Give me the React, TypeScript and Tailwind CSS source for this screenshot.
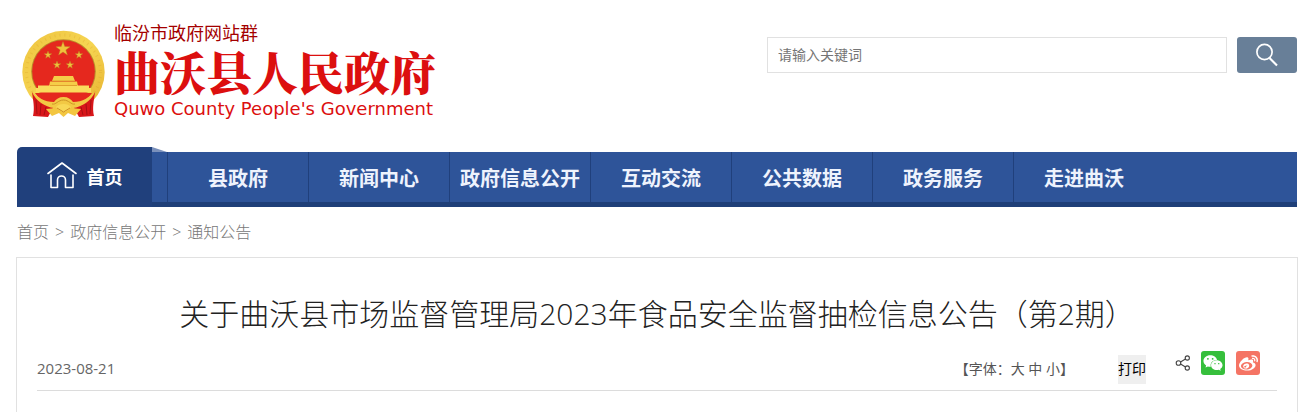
import { FaWeibo, FaWeixin } from "react-icons/fa6";

const NAV_ITEMS = [
  "县政府",
  "新闻中心",
  "政府信息公开",
  "互动交流",
  "公共数据",
  "政务服务",
  "走进曲沃",
];

const BREADCRUMBS = ["首页", "政府信息公开", "通知公告"];

const STARS = [
  { x: 41, y: 19, r: 7.5 },
  { x: 26, y: 25, r: 4 },
  { x: 57, y: 25, r: 4 },
  { x: 35, y: 35, r: 4 },
  { x: 48, y: 35, r: 4 },
];

function starPoints(cx: number, cy: number, r: number) {
  return Array.from({ length: 10 })
    .map((_, index) => {
      const radius = index % 2 === 0 ? r : r * 0.4;
      const angle = (Math.PI / 5) * index - Math.PI / 2;
      return `${cx + radius * Math.cos(angle)},${cy + radius * Math.sin(angle)}`;
    })
    .join(" ");
}

function Emblem() {
  return (
    <svg viewBox="0 0 84 88" className="h-[88px] w-[84px] shrink-0" aria-hidden="true">
      <defs>
        <linearGradient id="gold" x1="0" y1="0" x2="1" y2="1">
          <stop offset="0" stopColor="#eec440" />
          <stop offset="0.5" stopColor="#f6d552" />
          <stop offset="1" stopColor="#e6b02c" />
        </linearGradient>
      </defs>
      <circle cx="41.5" cy="42" r="41.2" fill="url(#gold)" />
      <circle cx="41.5" cy="42" r="37" fill="none" stroke="#d9a029" strokeWidth="3" strokeDasharray="1 4" opacity="0.3" />
      <circle cx="41.5" cy="41.5" r="32.300" fill="#b98a2a" />
      <circle cx="41.5" cy="41.5" r="31.3" fill="#e5281e" />
      {STARS.map((star) => (
        <polygon
          key={`${star.x}-${star.y}`}
          points={starPoints(star.x, star.y, star.r)}
          fill="#f0c23c"
          stroke="#b98424"
          strokeWidth="0.4"
        />
      ))}
      <path d="M32 46h19l2 5H30zM28 51.500h27l1 5H27z" fill="#f5cd48" />
      <path d="M16 55.500h51v2.500h2v4.500H14V58h2z" fill="#fadb5c" />
      <path d="M30 51h23M28 55.500h27" stroke="#d99426" strokeWidth="0.8" />
      <path d="M13 63h57l-7 9H20z" fill="#e5281e" />
      <path d="M10 62c5 7 13 12 22 14l-6 11-15-1c2-8 0-16-1-24z" fill="#d8161a" />
      <path d="M73 62c-5 7-13 12-22 14l6 11 15-1c-2-8 0-16 1-24z" fill="#d8161a" />
      <path d="M14 70l1 14M19 74l-1 11M24 77l-2 8M69 70l-1 14M64 74l1 11M59 77l2 8" stroke="#a80f13" strokeWidth="1" />
      <path
        d="M10 62c6 5 12 10 22 10 2-3 5-5 9.500-5s7.500 2 9.500 5c10 0 16-5 22-10-4 9-13 15-22 16-4 0-5-3-9.500-3s-5.500 3-9.500 3c-9-1-18-7-22-16z"
        fill="#f2c944"
      />
      <path d="M30 74c4 1 6-4 11.500-4s7.500 5 11.500 4" fill="none" stroke="#cf9626" strokeWidth="1" />
      <path d="M34 77c2-2 4-3 7.500-3s5.500 1 7.500 3l-3 5h-9z" fill="#f8d856" />
      <path d="M24 79l10-1 7.500 5 7.500-5 10 1-6 7-7-3-4.500 4-4.500-4-7 3z" fill="#f3c640" />
      <path d="M35 78l6.500 4 6.500-4" fill="none" stroke="#cf8f26" strokeWidth="1" />
    </svg>
  );
}

function HomeIcon() {
  return (
    <svg viewBox="0 0 30 28" className="h-7 w-[30px]" fill="none" stroke="#fff" strokeWidth="1.600" strokeLinecap="round" strokeLinejoin="round" aria-hidden="true">
      <path d="M1 12.500L15 2l14 10.500" />
      <path d="M4 14v12.500h6.500V19a4 4 0 0 1 8 0v7.500H26V14" />
    </svg>
  );
}

function SearchIcon() {
  return (
    <svg viewBox="0 0 24 26" className="h-[26px] w-6" fill="none" stroke="#fff" aria-hidden="true">
      <circle cx="9.500" cy="10" r="7.600" strokeWidth="1.700" />
      <path d="M14.500 16l7.500 7.500" strokeWidth="2.200" />
    </svg>
  );
}

function ShareIcon() {
  return (
    <svg viewBox="0 0 16 16" className="size-4" fill="none" stroke="#444" strokeWidth="1.100" aria-hidden="true">
      <circle cx="3.500" cy="8" r="2.300" />
      <circle cx="12.300" cy="3" r="2.100" />
      <circle cx="12.300" cy="13" r="2.100" />
      <path d="M5.500 6.900l5-2.900M5.500 9.100l5 2.900" />
    </svg>
  );
}

function Header() {
  return (
    <header className="flex items-start justify-between pt-5">
      <a href="#" className="flex items-start gap-2 pl-[5px]">
        <span className="pt-[10px]">
          <Emblem />
        </span>
        <span className="flex flex-col">
          <span className="text-[18px] leading-[26px] text-[#a40000]">临汾市政府网站群</span>
          <span className="font-['Noto_Serif_CJK_SC','Noto_Sans_CJK_SC',serif] text-[46px] leading-[48px] font-black text-[#dc0f0f]">
            曲沃县人民政府
          </span>
          <span className="font-['DejaVu_Sans',sans-serif] text-[18px] leading-[30px] text-[#dc0f0f]">
            Quwo County People's Government
          </span>
        </span>
      </a>
      <form className="flex gap-[10px] pt-[17px]" onSubmit={(event) => event.preventDefault()}>
        <input
          type="text"
          aria-label="请输入关键词"
          placeholder="请输入关键词"
          className="h-9 w-[460px] border border-[#e1e1e1] px-[10px] pb-[2px] text-[14px] text-[#333] outline-none placeholder:text-[#757575]"
        />
        <button
          type="submit"
          aria-label="搜索"
          className="flex h-9 w-[60px] items-center justify-center rounded-[3px] bg-[#687f98]"
        >
          <SearchIcon />
        </button>
      </form>
    </header>
  );
}

function MainNav() {
  return (
    <nav className="flex items-end">
      <a
        href="#"
        className="flex h-[60px] w-[135px] items-center justify-center gap-[10px] rounded-tl-[5px] bg-[#20407c] pb-1 text-[18px] font-bold text-white"
      >
        <HomeIcon />
        <span className="pt-1">首页</span>
      </a>
      <div className="relative flex h-[55px] flex-1 border-b-[5px] border-[#1f3f78] bg-[#2e5499] pl-[15px]">
        <svg viewBox="0 0 15 5" className="absolute -top-[5px] left-0 h-[5px] w-[15px]" aria-hidden="true">
          <path d="M0 0l15 5H0z" fill="#7a90bb" />
        </svg>
        {NAV_ITEMS.map((item) => (
          <a
            key={item}
            href="#"
            className="flex w-[141px] items-center justify-center border-l border-[#20407c] pt-[3px] text-[20px] font-bold whitespace-nowrap text-[#eef3fd]"
          >
            {item}
          </a>
        ))}
      </div>
    </nav>
  );
}

function ArticleMeta() {
  return (
    <div className="flex items-start justify-between border-b border-[#dcdcdc] pb-[10px]">
      <time dateTime="2023-08-21" className="pt-[5px] text-[15px] leading-6 text-[#666]">
        2023-08-21
      </time>
      <div className="flex h-6 items-start pr-[17px] text-[14px]">
        <p className="pt-[6px] leading-6 text-[#555]">
          【字体：
          <button type="button">大</button> <button type="button">中</button>{" "}
          <button type="button">小</button>】
        </p>
        <button type="button" className="mt-1 ml-[44px] bg-[#efefef] pt-[2px] pb-1 leading-[23px] text-black">
          打印
        </button>
        <div className="flex items-center pl-[29px]">
          <button type="button" aria-label="分享">
            <ShareIcon />
          </button>
          <button
            type="button"
            aria-label="微信"
            className="ml-[10px] flex size-6 items-center justify-center rounded-[3px] bg-[#36bf3c] text-white"
          >
            <FaWeixin size={20} />
          </button>
          <button
            type="button"
            aria-label="微博"
            className="ml-[11px] flex size-6 items-center justify-center rounded-[3px] bg-[#f57464] text-white"
          >
            <FaWeibo size={19} />
          </button>
        </div>
      </div>
    </div>
  );
}

export default function App() {
  return (
    <div className="bg-white pr-[15px] pl-[17px] font-['Open_Sans','Noto_Sans_CJK_SC',sans-serif]">
      <Header />
      <div className="pt-[23px]">
        <MainNav />
      </div>
      <div className="flex h-[50px] items-center gap-[6px] text-[16px] font-light text-[#777]">
        {BREADCRUMBS.map((crumb, index) => (
          <span key={crumb} className="flex items-center gap-[6px]">
            {index > 0 ? <span>&gt;</span> : null}
            <a href="#">{crumb}</a>
          </span>
        ))}
      </div>
      <main className="-mx-px min-h-[155px] border border-b-0 border-[#e1e1e1] px-5 pt-[35px]">
        <h1 className="text-center text-[30px] leading-[42px] font-light text-[#222]">
          关于曲沃县市场监督管理局2023年食品安全监督抽检信息公告（第2期）
        </h1>
        <div className="pt-4">
          <ArticleMeta />
        </div>
      </main>
    </div>
  );
}
